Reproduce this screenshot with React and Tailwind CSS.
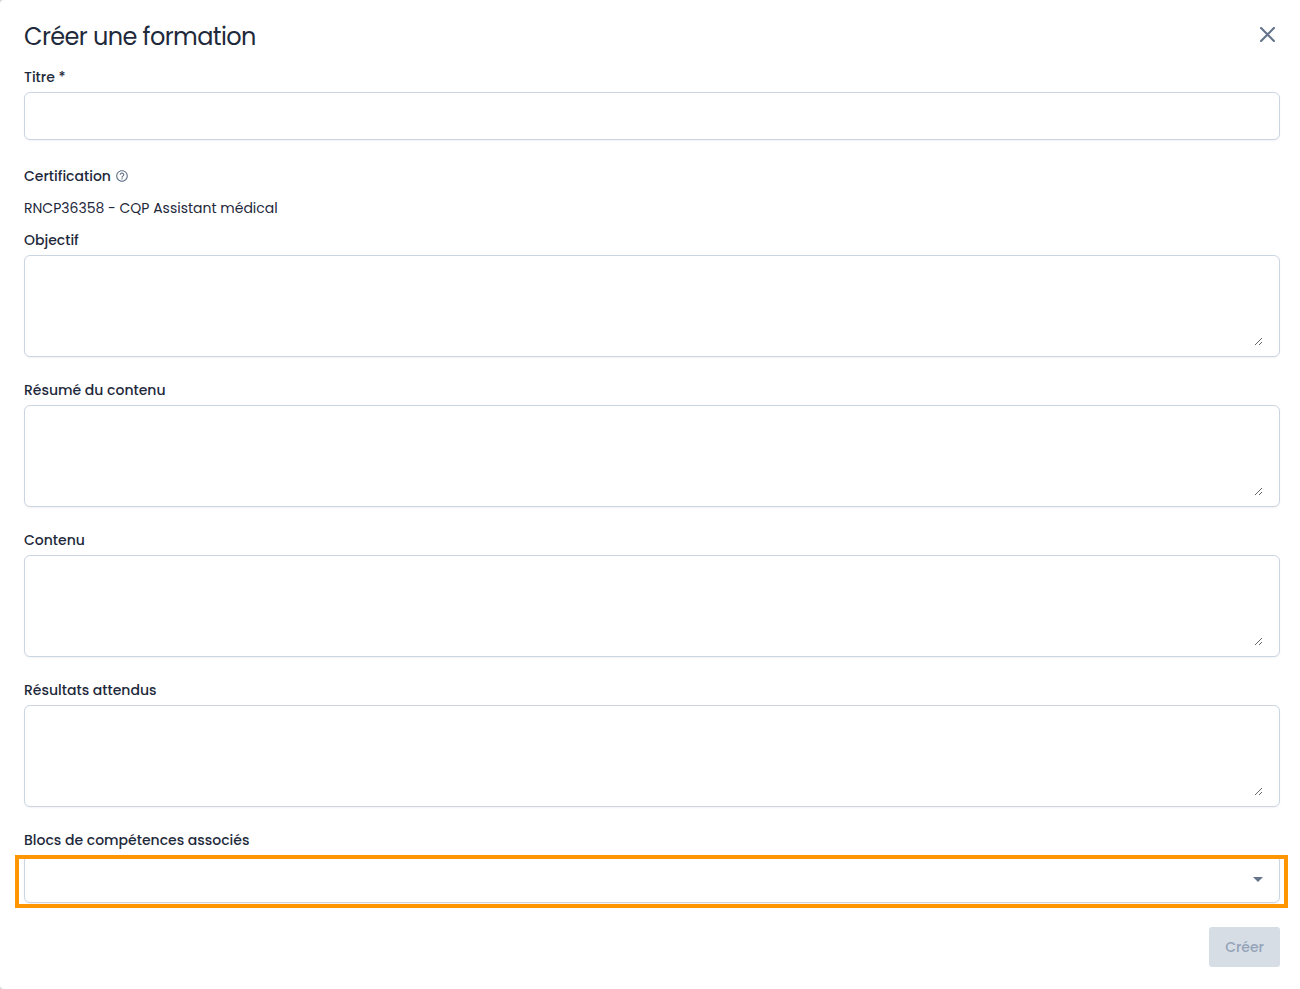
import { useState } from "react";

const labelClass = "text-sm leading-[22px] font-medium";
const boxClass = "rounded-md border border-[#cbd5e1] bg-white shadow-xs";

const textFields = [
  { id: "objectif", label: "Objectif" },
  { id: "resume", label: "Résumé du contenu" },
  { id: "contenu", label: "Contenu" },
  { id: "resultats", label: "Résultats attendus" },
];

function HelpIcon() {
  return (
    <svg viewBox="0 0 24 24" className="size-[14px] fill-[#64748b]" aria-hidden="true">
      <path d="M11 18h2v-2h-2v2zm1-16C6.48 2 2 6.48 2 12s4.48 10 10 10 10-4.48 10-10S17.52 2 12 2zm0 18c-4.41 0-8-3.59-8-8s3.59-8 8-8 8 3.59 8 8-3.59 8-8 8zm0-14c-2.21 0-4 1.79-4 4h2c0-1.1.9-2 2-2s2 .9 2 2c0 2-3 1.75-3 5h2c0-2.25 3-2.5 3-5 0-2.21-1.79-4-4-4z" />
    </svg>
  );
}

function TextAreaField({ id, label, value, onChange }) {
  return (
    <div className="flex flex-col gap-1">
      <label htmlFor={id} className={labelClass}>
        {label}
      </label>
      <div className={`${boxClass} flex h-[102px] px-4 py-[10px]`}>
        <textarea
          id={id}
          value={value}
          onChange={onChange}
          className="w-full resize text-sm outline-none"
        />
      </div>
    </div>
  );
}

export default function App() {
  const [form, setForm] = useState({
    titre: "",
    objectif: "",
    resume: "",
    contenu: "",
    resultats: "",
    blocs: "",
  });

  const update = (key) => (e) => setForm({ ...form, [key]: e.target.value });

  return (
    <div className="bg-gray-300">
      <form
        onSubmit={(e) => e.preventDefault()}
        className="min-h-screen rounded-l-sm bg-white pt-5 pr-5 pb-5 pl-6 font-[Poppins,Inter,sans-serif] text-[#1e293b]"
      >
        <div className="flex items-start justify-between">
          <h1 className="pt-px text-2xl leading-8 tracking-tight">Créer une formation</h1>
          <button type="button" aria-label="Fermer" className="px-[5px] py-[7px] text-[#64748b]">
            <svg viewBox="0 0 14 14" className="size-[15px] fill-none stroke-current stroke-2">
              <path d="M1 1l12 12M13 1L1 13" strokeLinecap="round" />
            </svg>
          </button>
        </div>

        {/* Titre */}
        <div className="mt-[13px] flex flex-col gap-1">
          <label htmlFor="titre" className={labelClass}>
            Titre *
          </label>
          <input
            id="titre"
            type="text"
            value={form.titre}
            onChange={update("titre")}
            className={`${boxClass} h-12 px-4 text-sm outline-none`}
          />
        </div>

        {/* Certification */}
        <div className="mt-[25px] mb-[10px] flex flex-col gap-[10px]">
          <div className="flex items-center gap-1">
            <span className={labelClass}>Certification</span>
            <HelpIcon />
          </div>
          <p className="text-sm leading-[22px]">RNCP36358 - CQP Assistant médical</p>
        </div>

        <div className="flex flex-col gap-[22px]">
          {textFields.map((field) => (
            <TextAreaField
              key={field.id}
              id={field.id}
              label={field.label}
              value={form[field.id]}
              onChange={update(field.id)}
            />
          ))}

          {/* Blocs de compétences */}
          <div className="flex flex-col gap-1">
            <label htmlFor="blocs" className={labelClass}>
              Blocs de compétences associés
            </label>
            <div className="relative flex items-center">
              <select
                id="blocs"
                value={form.blocs}
                onChange={update("blocs")}
                className={`${boxClass} h-12 w-full appearance-none px-4 text-sm outline-none`}
              >
                <option value=""></option>
              </select>
              <svg
                viewBox="0 0 10 5"
                className="pointer-events-none absolute right-[17px] h-[5px] w-[10px] fill-[#64748b]"
              >
                <path d="M0 0l5 5 5-5z" />
              </svg>
              <div className="pointer-events-none absolute top-0 -right-2 -bottom-[5px] -left-[9px] border-4 border-[#ff9500]" />
            </div>
          </div>
        </div>

        <div className="mt-6 flex justify-end">
          <button
            type="submit"
            disabled
            className="h-10 rounded-[3px] bg-[#d6dde5] px-4 text-sm font-medium text-[#94a3b8]"
          >
            Créer
          </button>
        </div>
      </form>
    </div>
  );
}
